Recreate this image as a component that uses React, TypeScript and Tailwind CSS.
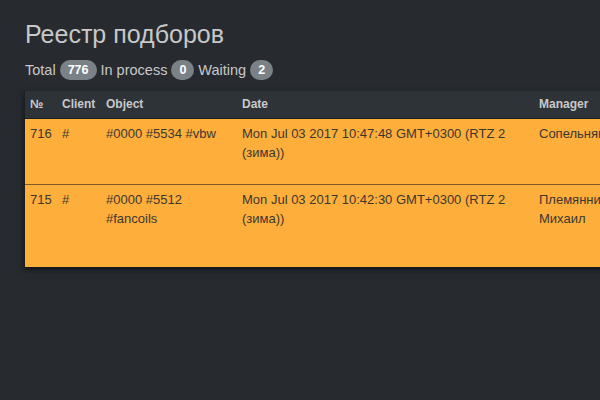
import React from "react";

interface Selection {
  id: number;
  client: string;
  object: string[];
  date: string[];
  manager: string[];
  height: string;
}

const rows: Selection[] = [
  {
    id: 716,
    client: "#",
    object: ["#0000 #5534 #vbw"],
    date: ["Mon Jul 03 2017 10:47:48 GMT+0300 (RTZ 2", "(зима))"],
    manager: ["Сопельняк Андрей"],
    height: "h-[65px]",
  },
  {
    id: 715,
    client: "#",
    object: ["#0000 #5512", "#fancoils"],
    date: ["Mon Jul 03 2017 10:42:30 GMT+0300 (RTZ 2", "(зима))"],
    manager: ["Племянников", "Михаил"],
    height: "h-[83px]",
  },
];

const Badge = ({ value }: { value: number }) => (
  <span className="inline-flex items-center justify-center h-[20px] px-[8px] min-w-[21px] rounded-full bg-[#7a8288] text-white text-[12.5px] font-bold leading-none">
    {value}
  </span>
);

const App: React.FC = () => {
  return (
    <div
      className="w-[600px] h-[400px] overflow-hidden bg-[#272b30] text-[#c8c8c8]"
      style={{ fontFamily: '"Liberation Sans", Arial, sans-serif' }}
    >
      <div className="pl-[24px] pt-[21px]">
        <h1 className="pl-[1px] text-[25px] leading-[27px] text-[#c8c8c8]">
          Реестр подборов
        </h1>

        <div className="mt-[12px] pl-[1px] flex items-center gap-[4px] text-[14.5px] leading-[20px]">
          <span>Total</span>
          <Badge value={776} />
          <span>In process</span>
          <Badge value={0} />
          <span>Waiting</span>
          <Badge value={2} />
        </div>

        <div className="mt-[11px] w-[700px] border-l border-[#1c1e22] shadow-[0_3px_6px_rgba(0,0,0,0.55)]">
          {/* header */}
          <div className="flex h-[28px] bg-[#2e3338] border-b border-[#1c1e22] text-[12px] font-bold leading-[17px] text-[#c8c8c8]">
            <div className="w-[32px] pl-[5px] pt-[5px]">№</div>
            <div className="w-[44px] pl-[5px] pt-[5px]">Client</div>
            <div className="w-[136px] pl-[5px] pt-[5px]">Object</div>
            <div className="w-[297px] pl-[5px] pt-[5px]">Date</div>
            <div className="flex-1 pl-[5px] pt-[5px]">Manager</div>
          </div>

          {rows.map((r, idx) => (
            <div
              key={r.id}
              className={`flex ${r.height} bg-[#feae3b] text-[13px] leading-[19px] text-[#3b3830] ${
                idx > 0 ? "border-t border-[#7d5c2c]" : ""
              }`}
            >
              <div className="w-[32px] pl-[5px] pt-[5px]">{r.id}</div>
              <div className="w-[44px] pl-[5px] pt-[5px]">{r.client}</div>
              <div className="w-[136px] pl-[5px] pt-[5px]">
                {r.object.map((l) => (
                  <div key={l} className="whitespace-nowrap">{l}</div>
                ))}
              </div>
              <div className="w-[297px] pl-[5px] pt-[5px]">
                {r.date.map((l) => (
                  <div key={l} className="whitespace-nowrap">{l}</div>
                ))}
              </div>
              <div className="flex-1 pl-[5px] pt-[5px]">
                {r.manager.map((l) => (
                  <div key={l} className="whitespace-nowrap">{l}</div>
                ))}
              </div>
            </div>
          ))}
        </div>
      </div>
    </div>
  );
};

export default App;
